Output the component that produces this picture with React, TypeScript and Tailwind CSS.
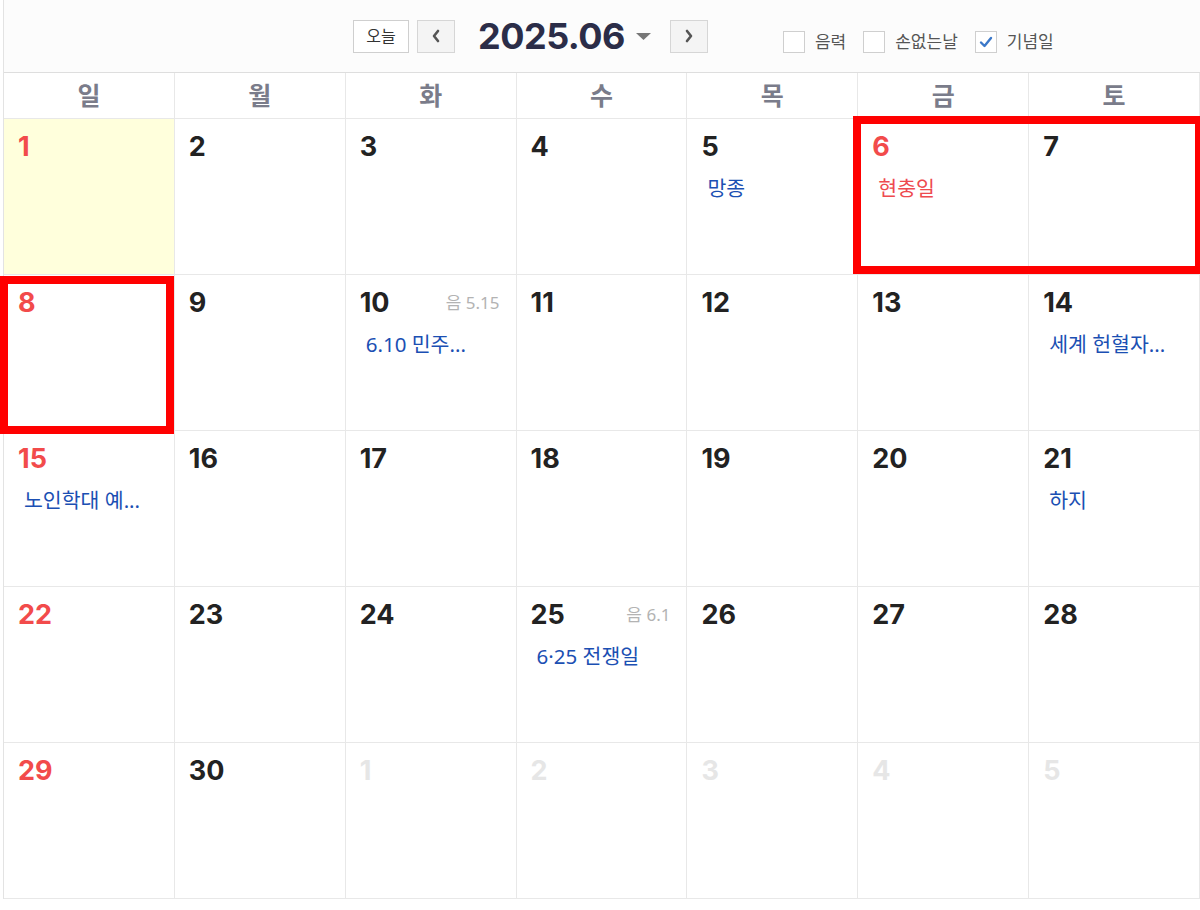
import React from "react"

type Day = {
  n: number
  tone?: "red" | "dim"
  lunar?: string
  event?: string
  eventRed?: boolean
  today?: boolean
}

const weeks: Day[][] = [
  [
    { n: 1, tone: "red", today: true },
    { n: 2 },
    { n: 3 },
    { n: 4 },
    { n: 5, event: "망종" },
    { n: 6, tone: "red", event: "현충일", eventRed: true },
    { n: 7 },
  ],
  [
    { n: 8, tone: "red" },
    { n: 9 },
    { n: 10, lunar: "5.15", event: "6.10 민주..." },
    { n: 11 },
    { n: 12 },
    { n: 13 },
    { n: 14, event: "세계 헌혈자..." },
  ],
  [
    { n: 15, tone: "red", event: "노인학대 예..." },
    { n: 16 },
    { n: 17 },
    { n: 18 },
    { n: 19 },
    { n: 20 },
    { n: 21, event: "하지" },
  ],
  [
    { n: 22, tone: "red" },
    { n: 23 },
    { n: 24 },
    { n: 25, lunar: "6.1", event: "6·25 전쟁일" },
    { n: 26 },
    { n: 27 },
    { n: 28 },
  ],
  [
    { n: 29, tone: "red" },
    { n: 30 },
    { n: 1, tone: "dim" },
    { n: 2, tone: "dim" },
    { n: 3, tone: "dim" },
    { n: 4, tone: "dim" },
    { n: 5, tone: "dim" },
  ],
]

const weekdays = ["일", "월", "화", "수", "목", "금", "토"]

const numFont = { fontFamily: 'Inter, "Noto Sans", sans-serif' }

function Check({ label, checked }: { label: string; checked?: boolean }) {
  return (
    <label className="flex items-center gap-[10px]">
      <span className="flex h-[22px] w-[22px] items-center justify-center border border-[#cfcfcf] bg-white">
        {checked && (
          <svg width="14" height="12" viewBox="0 0 14 12">
            <path d="M2 6.5 L5.5 10 L12 2" fill="none" stroke="#3b78c9" strokeWidth="2.4" strokeLinecap="round" strokeLinejoin="round" />
          </svg>
        )}
      </span>
      <span className="text-[17px] text-[#555]">{label}</span>
    </label>
  )
}

function Cell({ d }: { d: Day }) {
  const numColor =
    d.tone === "red" ? "text-[#f24b4b]" : d.tone === "dim" ? "text-[#e6e6e6]" : "text-[#222]"
  return (
    <div
      className={`h-[156px] border-r border-b border-[#e8e8e8] pt-[13px] pl-[14px] pr-[16px] ${
        d.today ? "bg-[#ffffdc]" : "bg-white"
      }`}
    >
      <div className="flex items-center justify-between">
        <span className={`text-[27px] leading-[30px] font-bold ${numColor}`} style={numFont}>
          {d.n}
        </span>
        {d.lunar && <span className="text-[17px] text-[#b3b3b3]">음 {d.lunar}</span>}
      </div>
      {d.event && (
        <div
          className={`mt-[14px] pl-[6px] text-[20.5px] leading-[24px] whitespace-nowrap ${
            d.eventRed ? "text-[#ee4a4f]" : "text-[#1b4fb3]"
          }`}
        >
          {d.event}
        </div>
      )}
    </div>
  )
}

export default function App() {
  return (
    <div
      className="relative h-[910px] w-[1200px] overflow-hidden bg-white"
      style={{ fontFamily: '"Noto Sans", "Noto Sans CJK KR", sans-serif' }}
    >
      <div className="ml-[3px] border-l border-[#e3e3e3]">
        {/* top toolbar */}
        <div className="flex h-[73px] items-center border-b border-[#dedede] bg-[#fcfcfc] pl-[349px]">
          <button className="flex h-[33px] w-[56px] items-center justify-center border border-[#cfcfcf] bg-white text-[16px] text-[#333]">
            오늘
          </button>
          <button className="ml-[8px] flex h-[33px] w-[38px] items-center justify-center border border-[#d6d6d6] bg-[#f4f4f4]">
            <svg width="10" height="14" viewBox="0 0 10 14">
              <path d="M7 2 L3 7 L7 12" fill="none" stroke="#555" strokeWidth="2.6" strokeLinecap="round" strokeLinejoin="round" />
            </svg>
          </button>
          <span
            className="ml-[23px] text-[36px] leading-none font-bold tracking-[-0.5px] text-[#2b2d48]"
            style={numFont}
          >
            2025.06
          </span>
          <svg className="ml-[10px]" width="17" height="7" viewBox="0 0 17 7">
            <path d="M1 0 L16 0 L8.5 7 Z" fill="#777" />
          </svg>
          <button className="ml-[18px] flex h-[33px] w-[38px] items-center justify-center border border-[#d6d6d6] bg-[#f4f4f4]">
            <svg width="10" height="14" viewBox="0 0 10 14">
              <path d="M3 2 L7 7 L3 12" fill="none" stroke="#555" strokeWidth="2.6" strokeLinecap="round" strokeLinejoin="round" />
            </svg>
          </button>
          <div className="ml-[75px] mt-[12px] flex items-center gap-[17px]">
            <Check label="음력" />
            <Check label="손없는날" />
            <Check label="기념일" checked />
          </div>
        </div>

        {/* weekday header */}
        <div className="grid grid-cols-7">
          {weekdays.map((w) => (
            <div
              key={w}
              className="flex h-[46px] items-center justify-center border-r border-b border-[#e8e8e8] text-[25px] font-bold text-[#7a7c8a]"
            >
              {w}
            </div>
          ))}
        </div>

        {/* weeks */}
        <div className="grid grid-cols-7">
          {weeks.flat().map((d, i) => (
            <Cell key={i} d={d} />
          ))}
        </div>
      </div>

      {/* highlight boxes */}
      <div className="pointer-events-none absolute left-[853px] top-[116px] h-[158px] w-[350px] border-[8px] border-[#ff0000]" />
      <div className="pointer-events-none absolute left-0 top-[276px] h-[158px] w-[174px] border-[8px] border-[#ff0000]" />
    </div>
  )
}
